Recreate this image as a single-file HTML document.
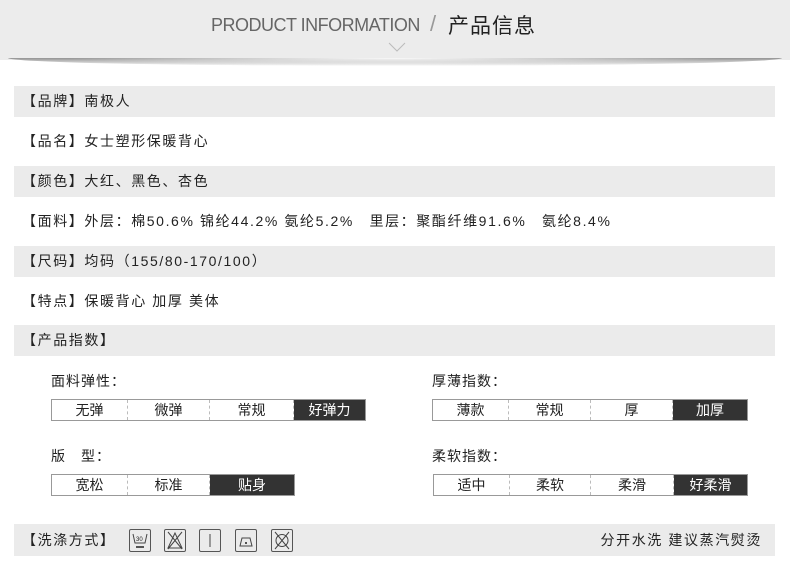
<!DOCTYPE html>
<html><head><meta charset="utf-8"><style>
*{margin:0;padding:0;box-sizing:border-box}
body{width:790px;height:568px;background:#fff;position:relative;overflow:hidden;font-family:"Liberation Sans","WenQuanYi Zen Hei","Noto Sans CJK SC",sans-serif;color:#222}
.hdr{position:absolute;left:0;top:0;width:790px;height:60px;background:#ececec}
.shadow{position:absolute;left:8px;top:58px;width:774px;height:8px;background:radial-gradient(ellipse at 50% 0%,rgba(255,255,255,1) 0%,rgba(255,255,255,0) 60%),linear-gradient(#8a8a8a,#fff);opacity:.9;border-radius:0 0 50% 50%/0 0 100% 100%}
.t1{position:absolute;left:211px;top:15px;font-size:18px;color:#666;letter-spacing:-0.5px}
.sl{position:absolute;left:430px;top:11px;font-size:22px;color:#999;font-weight:300}
.t2{position:absolute;left:448px;top:10px;font-size:21px;color:#222;letter-spacing:1px}
.row{position:absolute;left:14px;width:761px;height:31px;font-size:14px;line-height:31px;padding-left:8px;letter-spacing:1.6px}
.g{background:#ebebeb}
.lab{position:absolute;font-size:14px;letter-spacing:1px}
.sc{position:absolute;height:22px;border:1px solid #999;display:flex;font-size:14px}
.sc div{text-align:center;line-height:20px;border-right:1px dashed #bbb}
.sc div:last-child{border-right:none}
.sc .on{background:#333;color:#fff}
.ic{position:absolute;top:529px;width:22px;height:23px;border:1px solid #555;border-radius:2px}
</style></head><body>
<div class="hdr"></div><div class="shadow"></div>
<div class="t1">PRODUCT INFORMATION</div>
<div class="sl">/</div>
<div class="t2">产品信息</div>
<svg style="position:absolute;left:388px;top:42px" width="18" height="10"><path d="M1 1 L9 9 L17 1" fill="none" stroke="#bbb"/></svg>
<div class="row g" style="top:86px">【品牌】南极人</div>
<div class="row" style="top:126px">【品名】女士塑形保暖背心</div>
<div class="row g" style="top:166px">【颜色】大红、黑色、杏色</div>
<div class="row" style="top:206px">【面料】外层：棉50.6% 锦纶44.2% 氨纶5.2%　里层：聚酯纤维91.6%　氨纶8.4%</div>
<div class="row g" style="top:246px">【尺码】均码（155/80-170/100）</div>
<div class="row" style="top:286px">【特点】保暖背心 加厚 美体</div>
<div class="row g" style="top:325px">【产品指数】</div>
<div class="lab" style="left:51px;top:371px">面料弹性：</div>
<div class="sc" style="left:51px;top:399px;width:315px"><div style="width:76px">无弹</div><div style="width:82px">微弹</div><div style="width:84px">常规</div><div class="on" style="flex:1">好弹力</div></div>
<div class="lab" style="left:51px;top:446px">版　型：</div>
<div class="sc" style="left:51px;top:474px;width:244px"><div style="width:76px">宽松</div><div style="width:82px">标准</div><div class="on" style="flex:1">贴身</div></div>
<div class="lab" style="left:432px;top:371px">厚薄指数：</div>
<div class="sc" style="left:432px;top:399px;width:316px"><div style="width:76px">薄款</div><div style="width:82px">常规</div><div style="width:82px">厚</div><div class="on" style="flex:1">加厚</div></div>
<div class="lab" style="left:432px;top:446px">柔软指数：</div>
<div class="sc" style="left:433px;top:474px;width:315px"><div style="width:76px">适中</div><div style="width:81px">柔软</div><div style="width:83px">柔滑</div><div class="on" style="flex:1">好柔滑</div></div>
<div class="row g" style="top:524px;height:32px;line-height:32px">【洗涤方式】<span style="position:absolute;right:13px">分开水洗 建议蒸汽熨烫</span></div>
<div class="ic" style="left:129px"><svg width="20" height="21"><path d="M3 4 L5 13 L15 13 L17 4" fill="none" stroke="#444"/><text x="6" y="11" font-size="6" fill="#222">30</text><path d="M6 17 H14" stroke="#222" stroke-width="1.5"/></svg></div>
<div class="ic" style="left:164px"><svg width="20" height="21"><path d="M3 2 L17 19 M17 2 L3 19 M10 3 L3 18 H17 Z" fill="none" stroke="#444"/></svg></div>
<div class="ic" style="left:199px"><svg width="20" height="21"><path d="M10 4 V17" stroke="#444"/></svg></div>
<div class="ic" style="left:235px"><svg width="20" height="21"><path d="M4 16 L6 8 H14 L16 16 Z" fill="none" stroke="#444"/><circle cx="10" cy="13" r="1" fill="#222"/></svg></div>
<div class="ic" style="left:271px"><svg width="20" height="21"><path d="M3 2 L17 19 M17 2 L3 19" stroke="#444"/><circle cx="10" cy="10.5" r="6" fill="none" stroke="#444"/></svg></div>
</body></html>
